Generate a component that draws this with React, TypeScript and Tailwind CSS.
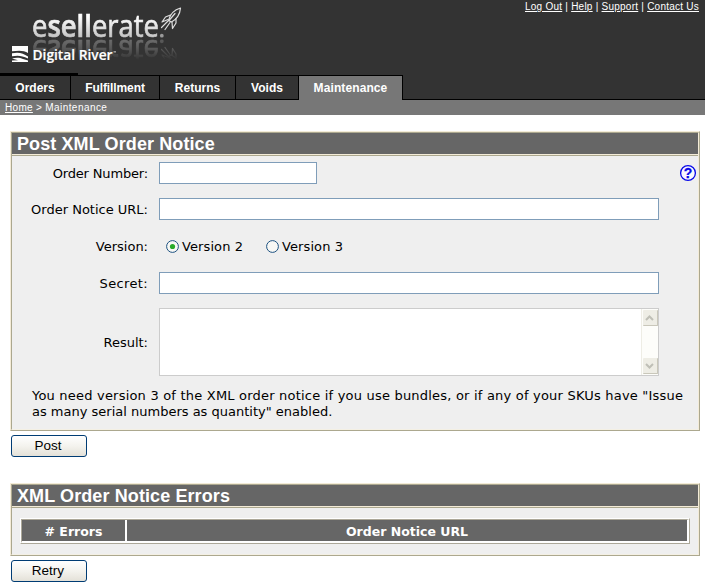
import React from "react";

const tabs = [
  { name: "Orders", width: "w-[71px]" },
  { name: "Fulfillment", width: "w-[89px] tracking-[-0.1px]" },
  { name: "Returns", width: "w-[76px]" },
  { name: "Voids", width: "w-[63px]" },
];

function Logo() {
  return (
    <div className="w-[200px]">
      <svg
        className="block overflow-visible [-webkit-box-reflect:below_1px_linear-gradient(to_bottom,transparent_45%,rgba(0,0,0,0.4))]"
        width="200"
        height="38"
        viewBox="0 0 200 38"
      >
        <defs>
          <linearGradient id="silver" x1="0" y1="0" x2="0" y2="1">
            <stop offset="0.3" stopColor="#ffffff" />
            <stop offset="0.85" stopColor="#bdbdbd" />
          </linearGradient>
        </defs>
        <text
          x="32"
          y="37"
          textLength="127"
          lengthAdjust="spacingAndGlyphs"
          fontFamily="'Open Sans', 'Noto Sans', sans-serif"
          fontSize="30.500"
          fill="url(#silver)"
          stroke="url(#silver)"
          strokeWidth="0.700"
        >
          e<tspan fontWeight="600">sell</tspan>erate
        </text>
        <circle cx="161.800" cy="35.700" r="1.900" fill="#999" />
        <g fill="none" stroke="#dedede" strokeWidth="1.200" strokeLinejoin="round" strokeLinecap="round">
          <path d="M180.500 8C175 9.500 170.500 13 168.500 20.500L171.500 22C177 19 180 14 180.500 8Z" />
          <path d="M170.500 15L165.500 17L162 22L168 19.500" />
          <path d="M176 18.500L176 23L172.500 28.500L172 22" />
          <path d="M175 13.500L169 20.500M168 21C166 23 164 25 161.500 27.500M170 22.500L165 29.500" />
        </g>
      </svg>
      <svg className="relative block" width="200" height="35" viewBox="0 38 200 35" fill="#fff">
        <path d="M12 46H28V53C24 50.300 19 50.300 12 51.300Z" />
        <path d="M12 53.300C19 51.800 23 53.200 28 56.500V58.500C22 55.600 18 55 12 56.300Z" />
        <path d="M12 58.500C16 57.200 20 57.500 23 59L28 60.500V62H12V60.500L18 60.300Z" />
        <text
          x="32.500"
          y="59.500"
          fontFamily="'Open Sans', 'Noto Sans', sans-serif"
          fontWeight="600"
          fontSize="15"
          textLength="80"
          lengthAdjust="spacingAndGlyphs"
          stroke="#fff"
          strokeWidth="0.200"
        >
          Digital River
        </text>
        <path d="M113.500 51.500H116V52.300H113.500Z" />
      </svg>
    </div>
  );
}

function Heading({ children }: { children: React.ReactNode }) {
  return (
    <div className="border-b border-[#aca88f]">
      <h2 className="h-[22px] border-b border-[#f4ecd8] bg-[#666] pl-[5px] font-['Liberation_Sans',Arial,sans-serif] text-[18px] leading-[22px] font-bold tracking-[0.1px] whitespace-nowrap text-white">
        {children}
      </h2>
    </div>
  );
}

function Row({ label, height, children }: { label: React.ReactNode; height: string; children: React.ReactNode }) {
  return (
    <div className={"flex items-center " + height}>
      <div className="w-[136px] shrink-0 pt-[2px] text-right whitespace-nowrap">{label}</div>
      <div className="ml-[11px] flex min-w-0 flex-1 items-center">{children}</div>
    </div>
  );
}

function Field({ width }: { width: string }) {
  return <input className={"block h-[22px] border border-[#7f9db9] bg-white px-1 outline-none " + width} />;
}

function Radio({ checked }: { checked?: boolean }) {
  return (
    <svg width="13" height="13" viewBox="0 0 13 13" className="shrink-0">
      <circle cx="6.500" cy="6.500" r="5.900" fill="#f8f8f5" stroke="#1c5180" strokeWidth="1" />
      {checked && <circle cx="6.500" cy="6.500" r="2.600" fill="#29aa29" />}
    </svg>
  );
}

function ScrollButton({ down }: { down?: boolean }) {
  return (
    <div className="flex h-[16px] w-[15px] items-center justify-center rounded-[1px] border-r border-b border-[#c9c7ba] bg-[#eeede5]">
      <svg width="9" height="6" viewBox="0 0 9 6" fill="none" stroke="#bfbfb6" strokeWidth="2">
        <path d={down ? "M1 1L4.500 4.500L8 1" : "M1 5L4.500 1.500L8 5"} />
      </svg>
    </div>
  );
}

function Button({ children }: { children: React.ReactNode }) {
  return (
    <button className="ml-[11px] block h-[22px] w-[76px] rounded-[3px] border border-[#003c74] bg-linear-to-b from-white via-[#f4f3ee] to-[#e4e1d8] pr-[2px] pb-px font-['Liberation_Sans',Arial,sans-serif] text-[13.5px] leading-[18px] text-black">
      {children}
    </button>
  );
}

export default function App() {
  return (
    <div className="h-[588px] w-[705px] overflow-hidden bg-white font-['DejaVu_Sans',Verdana,sans-serif] text-[13px] text-black">
      <header className="bg-[#333]">
        <div className="flex h-[73px] justify-between">
          <Logo />
          <nav className="mr-[6px] pt-px font-['Liberation_Sans',Arial,sans-serif] text-[10px] leading-[12px] tracking-[0.24px] whitespace-nowrap text-white">
            <a className="underline">Log Out</a> | <a className="underline">Help</a> | <a className="underline">Support</a> | <a className="underline">Contact Us</a>
          </nav>
        </div>
        <div className="h-[2px] w-[78px] bg-black" />
        <div className="flex h-[25px] font-['Liberation_Sans',Arial,sans-serif] text-[12px] leading-[24px] font-bold text-white">
          {tabs.map((t) => (
            <div key={t.name} className={"border-y border-r border-black text-center " + t.width}>
              {t.name}
            </div>
          ))}
          <div className="w-[104px] border-t border-r border-black bg-[#777] text-center tracking-[0.1px]">Maintenance</div>
          <div className="flex-1 border-b border-black" />
        </div>
      </header>
      <div className="h-[15px] bg-[#777] pl-[5px] font-['Liberation_Sans',Arial,sans-serif] text-[10px] leading-[15px] tracking-[0.3px] text-white">
        <a className="underline">Home</a> &gt; <span className="tracking-[0.45px]">Maintenance</span>
      </div>

      <section className="mt-[16px] ml-[10px] h-[300px] w-[690px] border border-t-[#f4ecd8] border-r-[#aca88f] border-b-[#aca88f] border-l-[#f4ecd8]">
        <div className="h-full border border-t-[#aca88f] border-r-[#f4ecd8] border-b-[#f4f0e4] border-l-[#aca88f] bg-[#efefef]">
          <Heading>Post XML Order Notice</Heading>
          <div className="pt-[6px]">
            <Row label={<span className="tracking-[-0.16px]">Order Number:</span>} height="h-[22px]">
              <Field width="w-[158px]" />
              <svg className="mr-px ml-auto" width="18" height="18" viewBox="0 0 18 18">
                <circle cx="9" cy="9" r="7.400" fill="#f8f8ff" stroke="#0808e8" strokeWidth="1.300" />
                <text x="9" y="14" textAnchor="middle" fontFamily="Liberation Sans, sans-serif" fontWeight="bold" fontSize="14" fill="#0808e8" stroke="#0808e8" strokeWidth="0.300">?</text>
              </svg>
            </Row>
            <div className="mt-[14px]">
              <Row label="Order Notice URL:" height="h-[22px]">
                <Field width="w-[500px]" />
              </Row>
            </div>
            <div className="mt-[15px]">
              <Row label="Version:" height="h-[22px]">
                <div className="ml-[7px] flex w-[100px] items-center gap-[3px]">
                  <Radio checked />
                  <span className="pt-[2px] tracking-[0.1px]">Version 2</span>
                </div>
                <div className="flex items-center gap-[3px]">
                  <Radio />
                  <span className="pt-[2px] tracking-[0.1px]">Version 3</span>
                </div>
              </Row>
            </div>
            <div className="mt-[15px]">
              <Row label={<span className="tracking-[0.35px]">Secret:</span>} height="h-[22px]">
                <Field width="w-[500px]" />
              </Row>
            </div>
            <div className="mt-[14px]">
              <Row label="Result:" height="h-[68px]">
                <div className="flex h-[68px] w-[500px] justify-end border border-[#cccccc] bg-white">
                  <div className="flex w-[17px] flex-col items-center justify-between border-l border-[#eeede5] bg-[#fdfdfa] py-px">
                    <ScrollButton />
                    <ScrollButton down />
                  </div>
                </div>
              </Row>
            </div>
            <p className="mt-[12px] ml-[20px] leading-[16px] whitespace-nowrap">
              <span className="tracking-[0.205px]">
                You need version 3 of the XML order notice if you use bundles, or if any of your SKUs have "Issue
              </span>
              <br />
              as many serial numbers as quantity" enabled.
            </p>
          </div>
        </div>
      </section>
      <div className="mt-[4px]">
        <Button>Post</Button>
      </div>

      <section className="mt-[26px] ml-[10px] h-[73px] w-[690px] border border-t-[#f4ecd8] border-r-[#aca88f] border-b-[#aca88f] border-l-[#f4ecd8]">
        <div className="h-full border border-t-[#aca88f] border-r-[#f4ecd8] border-b-[#f4f0e4] border-l-[#aca88f] bg-[#efefef]">
          <Heading>XML Order Notice Errors</Heading>
          <div className="mt-[10px] ml-[8px] h-[26px] w-[670px] border border-t-white border-r-[#aca899] border-b-[#aca899] border-l-white">
            <div className="flex h-full gap-[2px] border-t border-r-2 border-b-2 border-l border-t-[#aca899] border-r-white border-b-white border-l-[#aca899] bg-white text-center text-[12.5px] leading-[23px] font-bold text-white">
              <div className="w-[103px] bg-[#666]"># Errors</div>
              <div className="flex-1 bg-[#666]">Order Notice URL</div>
            </div>
          </div>
        </div>
      </section>
      <div className="mt-[4px]">
        <Button>Retry</Button>
      </div>
    </div>
  );
}
